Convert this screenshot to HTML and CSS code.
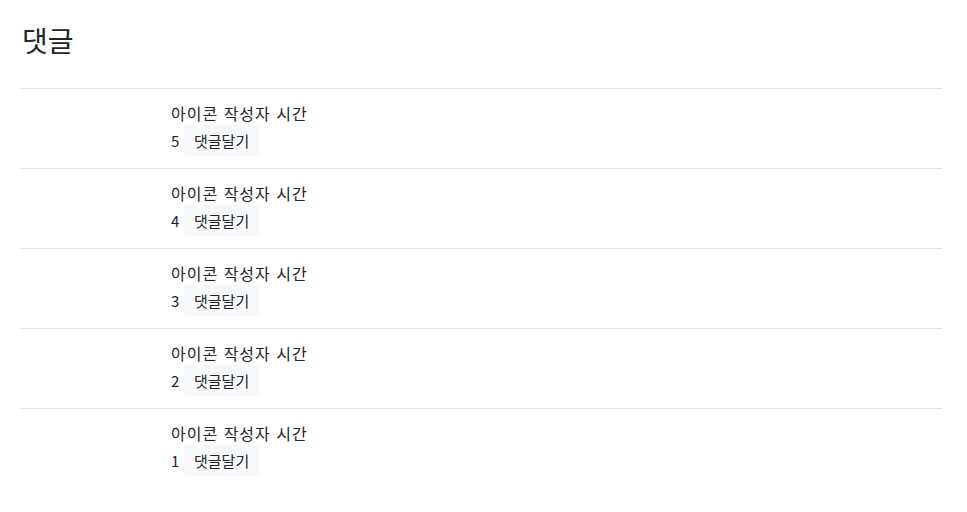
FILE: index.html
```html
<!DOCTYPE html>
<html lang="ko">
<head>
<meta charset="utf-8">
<title>댓글</title>
<link rel="stylesheet" href="styles.css">
</head>
<body>
<main class="page">
  <h2 class="title">댓글</h2>
  <ul class="comments">
    <li class="comment">
      <div class="meta">아이콘 작성자 시간</div>
      <div class="body"><span class="num">5</span><button class="reply">댓글달기</button></div>
    </li>
    <li class="comment">
      <div class="meta">아이콘 작성자 시간</div>
      <div class="body"><span class="num">4</span><button class="reply">댓글달기</button></div>
    </li>
    <li class="comment">
      <div class="meta">아이콘 작성자 시간</div>
      <div class="body"><span class="num">3</span><button class="reply">댓글달기</button></div>
    </li>
    <li class="comment">
      <div class="meta">아이콘 작성자 시간</div>
      <div class="body"><span class="num">2</span><button class="reply">댓글달기</button></div>
    </li>
    <li class="comment">
      <div class="meta">아이콘 작성자 시간</div>
      <div class="body"><span class="num">1</span><button class="reply">댓글달기</button></div>
    </li>
  </ul>
</main>
</body>
</html>
```

FILE: styles.css
```css
* { box-sizing: border-box; }
html, body { margin: 0; padding: 0; background: #fff; }
body {
  font-family: "Noto Sans CJK KR", "Noto Sans", sans-serif;
  color: #212529;
  font-size: 16px;
}
.page {
  padding: 0 25px 0 21px;
}
.title {
  margin: 0;
  padding: 20px 0 0 1px;
  font-size: 28px;
  font-weight: 400;
  line-height: 40px;
  height: 88px;
}
.comments {
  list-style: none;
  margin: 0;
  padding: 0;
}
.comment {
  border-top: 1px solid #dee2e6;
  padding: 12px 0 12px 150px;
  height: 80px;
}
.meta {
  height: 24px;
  line-height: 24px;
  letter-spacing: 1px;
}
.body {
  display: flex;
  align-items: center;
  height: 31px;
}
.num {
  width: 13px;
  font-size: 15px;
}
.reply {
  font-family: inherit;
  font-size: 15px;
  color: #212529;
  background: #f8f9fa;
  border: 0;
  border-radius: 3px;
  height: 31px;
  padding: 0 10px;
}
```
